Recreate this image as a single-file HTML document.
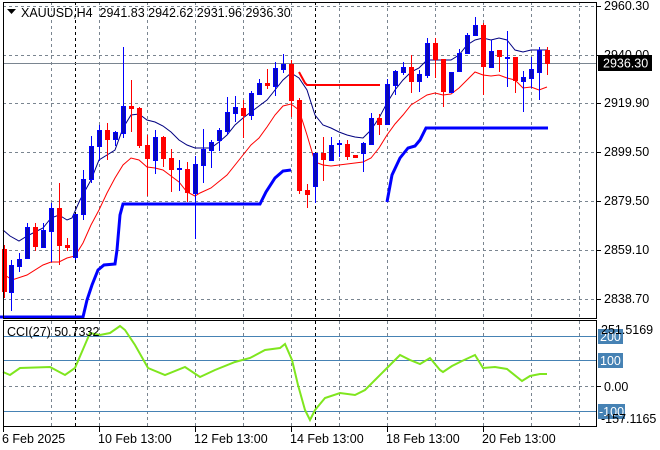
<!DOCTYPE html>
<html><head><meta charset="utf-8"><style>
html,body{margin:0;padding:0;background:#fff;}
svg{display:block;font-family:"Liberation Sans",sans-serif;font-size:12.5px;}
</style></head><body>
<svg width="660" height="450" viewBox="0 0 660 450" xmlns="http://www.w3.org/2000/svg">
<rect width="660" height="450" fill="#fff"/>
<g stroke="#7a8590" stroke-dasharray="3,3" stroke-width="1">
<path d="M51.5 2V318M99.5 2V318M147.5 2V318M195.5 2V318M243.5 2V318M291.5 2V318M339.5 2V318M387.5 2V318M435.5 2V318M483.5 2V318M531.5 2V318M579.5 2V318"/>
<path d="M51.5 321V426M99.5 321V426M147.5 321V426M195.5 321V426M243.5 321V426M291.5 321V426M339.5 321V426M387.5 321V426M435.5 321V426M483.5 321V426M531.5 321V426M579.5 321V426"/>
<path d="M3 6.5H596M3 55.5H596M3 103.5H596M3 152.5H596M3 201.5H596M3 250.5H596M3 299.5H596"/>
<path d="M3 386.5H596"/>
</g>
<g stroke="#000" stroke-dasharray="3,3"><path d="M75.5 2V318M315.5 2V318M75.5 321V426M315.5 321V426"/></g>
<path d="M3 63.5H596" stroke="#7a8590" stroke-width="1"/>
<path d="M3 336.5H596M3 360.5H596M3 411.5H596" stroke="#4682b4" stroke-width="1"/>
<polyline fill="none" stroke="#0000ff" stroke-width="3" points="0,317 83,317 87,300 92,285 98,270 104,265 115,264 117,250 120,215 123,204 260,204 266,192 275,178 283,171 291,170"/>
<polyline fill="none" stroke="#0000ff" stroke-width="3" points="387,202 392,175 400,158 408,148 415,146 420,140 426,128 475,128 548,128"/>
<polyline fill="none" stroke="#ff0000" stroke-width="2" points="299,72 305,83 307,85 380,85"/>
<polyline fill="none" stroke="#000080" stroke-width="1" points="3,230 10,236 19,241 27,236 35,232 43,228 51,218 59,215 67,220 72,218 80,200 91,180 99,160 107,155 115,150 123,128 131,115 139,114 147,120 155,122 163,126 171,132 179,140 187,145 195,148 203,148 211,148 219,142 227,135 235,125 243,118 251,112 259,106 267,100 275,90 283,80 291,73 299,78 307,90 315,115 323,125 331,128 339,132 347,135 355,137 363,138 371,130 379,118 387,103 395,90 403,80 411,72 419,68 427,60 435,60 443,60 451,60 459,55 467,45 475,40 483,38 491,40 499,38 507,40 515,50 523,52 531,50 547,50"/>
<polyline fill="none" stroke="#ff0000" stroke-width="1" points="5,275 12,280 27,275 43,265 51,262 59,262 67,258 75,256 83,243 91,225 99,210 107,193 115,178 123,165 131,158 139,160 147,167 155,168 163,170 171,176 179,182 187,192 195,196 200,193 211,188 227,175 243,155 251,145 259,138 267,127 275,115 283,106 291,104 299,110 307,135 315,162 323,165 331,166 347,164 363,162 371,158 379,148 387,135 395,124 403,115 411,105 419,100 427,95 435,93 443,95 451,94 459,88 467,80 475,72 483,75 491,76 499,75 507,78 515,80 523,88 531,87 539,90 547,87"/>
<g>
<g fill="#ff0000">
<rect x="4" y="245" width="1" height="53"/><rect x="2" y="249" width="5" height="43"/>
<rect x="35" y="223" width="1" height="28"/><rect x="33" y="227" width="5" height="20"/>
<rect x="59" y="183" width="1" height="82"/><rect x="57" y="208" width="5" height="38"/>
<rect x="67" y="238" width="1" height="13"/><rect x="65" y="245" width="5" height="3"/>
<rect x="107" y="123" width="1" height="37"/><rect x="105" y="130" width="5" height="10"/>
<rect x="131" y="80" width="1" height="52"/><rect x="129" y="106" width="5" height="3"/>
<rect x="139" y="107" width="1" height="41"/><rect x="137" y="108" width="5" height="38"/>
<rect x="147" y="135" width="1" height="61"/><rect x="145" y="145" width="5" height="14"/>
<rect x="163" y="136" width="1" height="31"/><rect x="161" y="137" width="5" height="22"/>
<rect x="171" y="149" width="1" height="43"/><rect x="169" y="158" width="5" height="12"/>
<rect x="187" y="162" width="1" height="40"/><rect x="185" y="169" width="5" height="24"/>
<rect x="243" y="100" width="1" height="38"/><rect x="241" y="108" width="5" height="8"/>
<rect x="267" y="69" width="1" height="20"/><rect x="265" y="83" width="5" height="3"/>
<rect x="291" y="60" width="1" height="57"/><rect x="289" y="64" width="5" height="37"/>
<rect x="299" y="98" width="1" height="96"/><rect x="297" y="100" width="5" height="91"/>
<rect x="307" y="184" width="1" height="24"/><rect x="305" y="190" width="5" height="5"/>
<rect x="323" y="137" width="1" height="44"/><rect x="321" y="153" width="5" height="7"/>
<rect x="347" y="140" width="1" height="20"/><rect x="345" y="144" width="5" height="13"/>
<rect x="353" y="155" width="5" height="3"/>
<rect x="379" y="114" width="1" height="21"/><rect x="377" y="118" width="5" height="7"/>
<rect x="411" y="55" width="1" height="38"/><rect x="409" y="67" width="5" height="15"/>
<rect x="435" y="38" width="1" height="40"/><rect x="433" y="43" width="5" height="17"/>
<rect x="443" y="59" width="1" height="48"/><rect x="441" y="59" width="5" height="33"/>
<rect x="483" y="23" width="1" height="72"/><rect x="481" y="25" width="5" height="42"/>
<rect x="499" y="50" width="1" height="22"/><rect x="497" y="50" width="5" height="7"/>
<rect x="515" y="57" width="1" height="36"/><rect x="513" y="57" width="5" height="24"/>
<rect x="547" y="47" width="1" height="28"/><rect x="545" y="50" width="5" height="14"/>
</g>
<g fill="#0a0ab4">
<g fill="#0000ff">
<rect x="11" y="260" width="1" height="51"/><rect x="19" y="253" width="1" height="19"/><rect x="27" y="223" width="1" height="35"/><rect x="43" y="223" width="1" height="24"/><rect x="51" y="203" width="1" height="59"/><rect x="75" y="214" width="1" height="46"/><rect x="83" y="170" width="1" height="50"/><rect x="91" y="136" width="1" height="47"/><rect x="99" y="125" width="1" height="36"/><rect x="115" y="131" width="1" height="15"/><rect x="123" y="47" width="1" height="91"/><rect x="155" y="130" width="1" height="44"/><rect x="179" y="160" width="1" height="31"/><rect x="195" y="156" width="1" height="83"/><rect x="203" y="129" width="1" height="54"/><rect x="211" y="140" width="1" height="28"/><rect x="219" y="128" width="1" height="23"/><rect x="227" y="97" width="1" height="38"/><rect x="235" y="96" width="1" height="26"/><rect x="251" y="91" width="1" height="29"/><rect x="259" y="79" width="1" height="16"/><rect x="275" y="62" width="1" height="34"/><rect x="283" y="54" width="1" height="19"/><rect x="315" y="153" width="1" height="50"/><rect x="331" y="137" width="1" height="23"/><rect x="339" y="140" width="1" height="17"/><rect x="363" y="142" width="1" height="30"/><rect x="371" y="113" width="1" height="31"/><rect x="387" y="79" width="1" height="45"/><rect x="395" y="70" width="1" height="25"/><rect x="403" y="62" width="1" height="13"/><rect x="419" y="70" width="1" height="22"/><rect x="427" y="38" width="1" height="40"/><rect x="451" y="72" width="1" height="20"/><rect x="459" y="49" width="1" height="22"/><rect x="467" y="33" width="1" height="20"/><rect x="475" y="17" width="1" height="18"/><rect x="491" y="40" width="1" height="27"/><rect x="507" y="31" width="1" height="56"/><rect x="523" y="71" width="1" height="41"/><rect x="531" y="57" width="1" height="31"/><rect x="539" y="47" width="1" height="53"/>
<rect x="177" y="168" width="5" height="2"/><rect x="337" y="143" width="5" height="2"/><rect x="505" y="57" width="5" height="2"/>
</g>
<g stroke="#0000ff" stroke-width="1">
<rect x="9.5" y="265.5" width="4" height="27"/><rect x="17.5" y="259.5" width="4" height="7"/><rect x="25.5" y="227.5" width="4" height="31"/><rect x="41.5" y="230.5" width="4" height="17"/><rect x="49.5" y="208.5" width="4" height="23"/><rect x="73.5" y="214.5" width="4" height="43"/><rect x="81.5" y="179.5" width="4" height="35"/><rect x="89.5" y="146.5" width="4" height="33"/><rect x="97.5" y="130.5" width="4" height="16"/><rect x="113.5" y="132.5" width="4" height="7"/><rect x="121.5" y="106.5" width="4" height="27"/><rect x="153.5" y="137.5" width="4" height="23"/><rect x="193.5" y="164.5" width="4" height="29"/><rect x="201.5" y="149.5" width="4" height="16"/><rect x="209.5" y="142.5" width="4" height="8"/><rect x="217.5" y="130.5" width="4" height="10"/><rect x="225.5" y="112.5" width="4" height="19"/><rect x="233.5" y="107.5" width="4" height="6"/><rect x="249.5" y="93.5" width="4" height="22"/><rect x="257.5" y="83.5" width="4" height="11"/><rect x="273.5" y="68.5" width="4" height="18"/><rect x="281.5" y="64.5" width="4" height="5"/><rect x="313.5" y="153.5" width="4" height="33"/><rect x="329.5" y="145.5" width="4" height="15"/><rect x="361.5" y="143.5" width="4" height="10"/><rect x="369.5" y="118.5" width="4" height="26"/><rect x="385.5" y="84.5" width="4" height="40"/><rect x="393.5" y="71.5" width="4" height="14"/><rect x="401.5" y="67.5" width="4" height="5"/><rect x="417.5" y="74.5" width="4" height="7"/><rect x="425.5" y="43.5" width="4" height="32"/><rect x="449.5" y="72.5" width="4" height="20"/><rect x="457.5" y="53.5" width="4" height="18"/><rect x="465.5" y="35.5" width="4" height="18"/><rect x="473.5" y="25.5" width="4" height="10"/><rect x="489.5" y="51.5" width="4" height="16"/><rect x="521.5" y="77.5" width="4" height="4"/><rect x="529.5" y="69.5" width="4" height="9"/><rect x="537.5" y="50.5" width="4" height="22"/>
</g>
</g>
</g>
<polyline fill="none" stroke="#7fe61e" stroke-width="2" points="3,372 10,375 20,368 50,367 65,375 75,368 90,333 100,335 110,333 120,326 125,330 135,345 148,368 165,375 185,367 200,377 215,370 235,362 250,358 265,350 280,348 285,344 292,360 298,385 305,410 310,420 315,410 325,398 340,393 355,395 365,390 375,380 385,370 400,355 410,360 420,364 430,358 440,370 443,372 452,366 462,361 475,355 483,368 495,367 507,369 522,381 530,376 540,374 547,374"/>
<rect x="3.5" y="2.5" width="593" height="316" fill="none" stroke="#000"/>
<rect x="3.5" y="320.5" width="593" height="106" fill="none" stroke="#000"/>
<g stroke="#000"><path d="M3.5 427V432M99.5 427V432M195.5 427V432M291.5 427V432M387.5 427V432M483.5 427V432"/>
<path d="M597 6.5h4M597 55.5h4M597 103.5h4M597 152.5h4M597 201.5h4M597 250.5h4M597 299.5h4M597 386.5h4"/></g>
<g fill="#000">
<text x="604" y="10">2960.30</text>
<text x="604" y="59">2940.00</text>
<text x="604" y="107">2919.90</text>
<text x="604" y="156">2899.50</text>
<text x="604" y="205">2879.50</text>
<text x="604" y="254">2859.10</text>
<text x="604" y="303">2838.70</text>
</g>
<rect x="598" y="55" width="54" height="16" fill="#000"/>
<text x="603" y="67.5" fill="#fff">2936.30</text>
<rect x="598" y="329" width="25" height="15" fill="#4682b4"/>
<text x="600" y="341" fill="#fff">200</text>
<rect x="598" y="353" width="25" height="15" fill="#4682b4"/>
<text x="600" y="365" fill="#fff">100</text>
<rect x="598" y="404" width="27" height="15" fill="#4682b4"/>
<text x="599" y="416" fill="#fff">-100</text>
<text x="601" y="334" fill="#000">251.5169</text>
<text x="604" y="391" fill="#000">0.00</text>
<text x="601" y="423" fill="#000">-157.1165</text>
<path d="M7 9h9l-4.5 5z" fill="#000"/>
<text x="21" y="17" fill="#000" xml:space="preserve">XAUUSD,H4  2941.83 2942.62 2931.96 2936.30</text>
<text x="7" y="336" fill="#000">CCI(27) 50.7332</text>
<g fill="#000">
<text x="2" y="443">6 Feb 2025</text>
<text x="98" y="443">10 Feb 13:00</text>
<text x="194" y="443">12 Feb 13:00</text>
<text x="290" y="443">14 Feb 13:00</text>
<text x="386" y="443">18 Feb 13:00</text>
<text x="482" y="443">20 Feb 13:00</text>
</g>
</svg>
</body></html>
